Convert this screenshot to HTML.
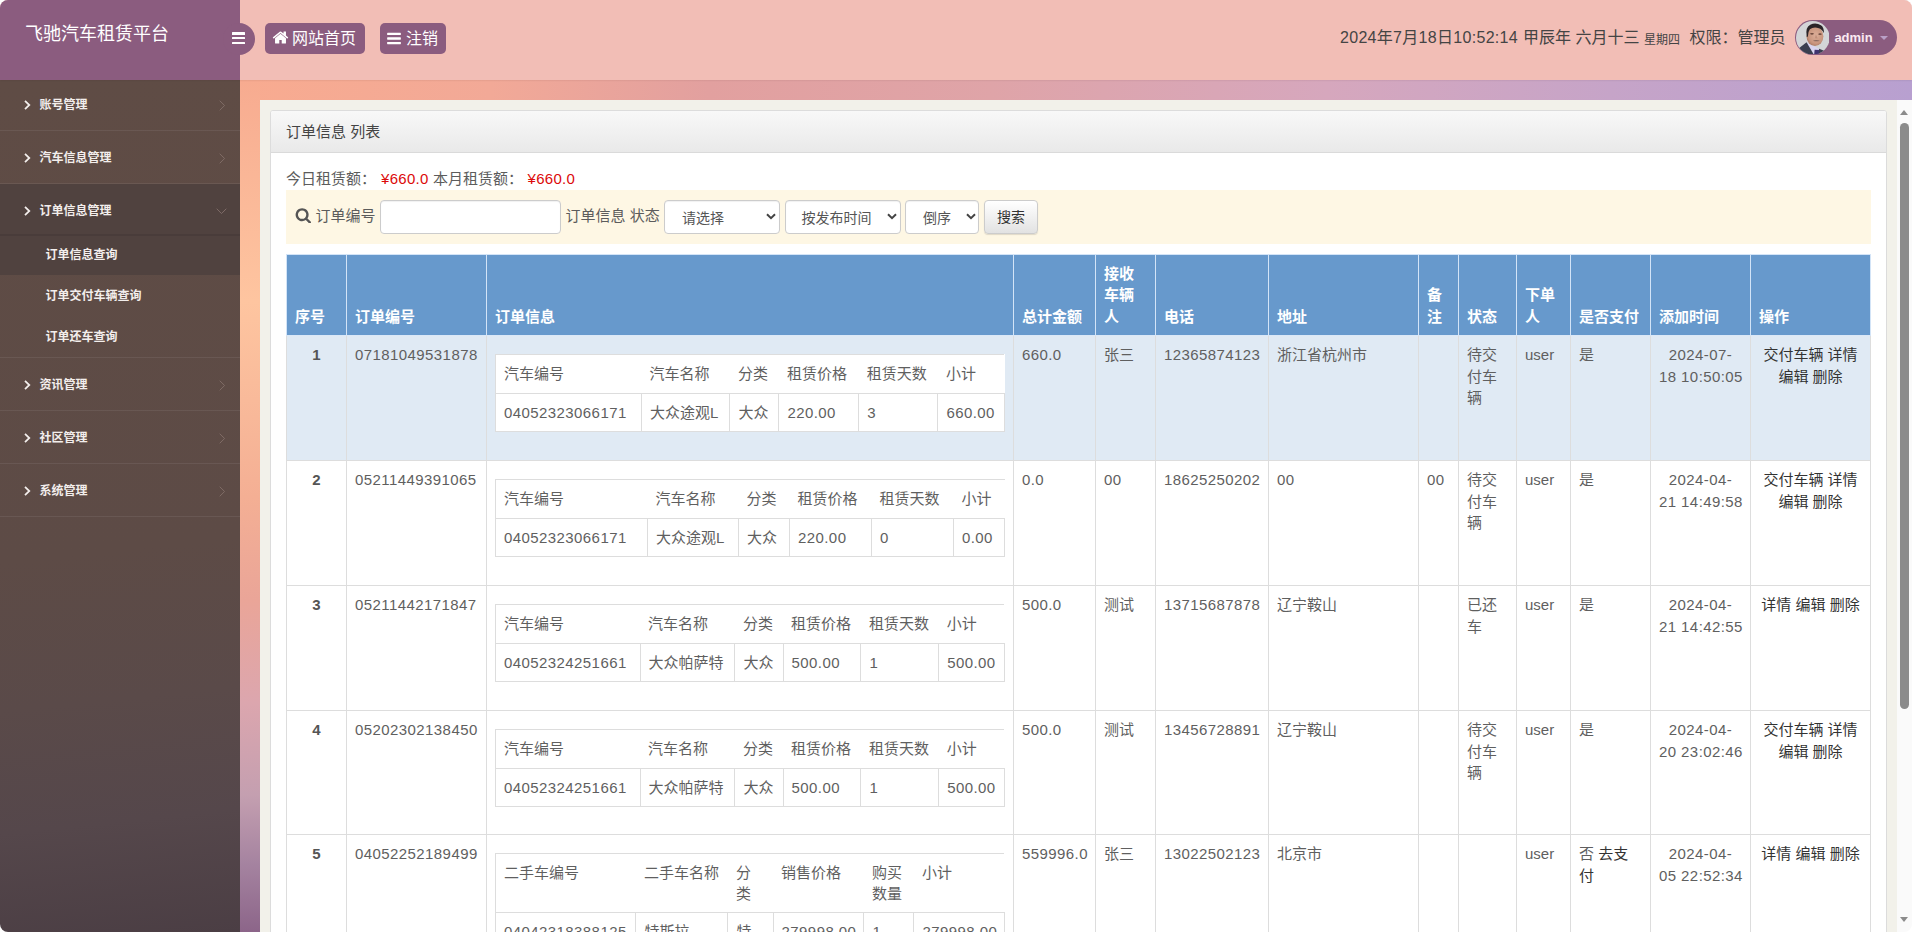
<!DOCTYPE html>
<html lang="zh-CN">
<head>
<meta charset="utf-8">
<title>飞驰汽车租赁平台</title>
<style>
*{box-sizing:border-box;margin:0;padding:0}
html,body{width:1912px;height:932px;overflow:hidden;background:#fff}
body{font-family:"Liberation Sans","Noto Sans CJK SC",sans-serif;font-size:15px;color:#5c5c5c;line-height:1.42857}
a{color:#333;text-decoration:none}
#app{position:absolute;left:0;top:0;width:1912px;height:932px;border-radius:8px;overflow:hidden;background:#fff}
/* ---------- header ---------- */
#top{position:absolute;left:0;top:0;width:1912px;height:80px;background:#f2beb6;z-index:5;box-shadow:0 0 2px rgba(60,30,30,.18)}
#brand{position:absolute;left:0;top:0;width:240px;height:80px;background:#8b5c7f}
#brand .t{position:absolute;left:25px;top:20px;font-size:18px;line-height:28px;color:#fff;white-space:nowrap;font-weight:400}
#tog{position:absolute;left:223px;top:23px;width:32px;height:32px;border-radius:16px;background:#8b5c7f}
#tog i{position:absolute;left:9px;width:13px;height:2.4px;background:#fff;border-radius:.5px}
.hbtn{position:absolute;top:23px;height:31px;background:#8b5c7f;border-radius:5px;color:#fff;font-size:16px;line-height:31px;white-space:nowrap}
.hbtn svg{position:absolute}
.hbtn span{position:absolute;top:0}
#clock{position:absolute;top:0;height:80px;color:#444;font-size:16px;line-height:22px;white-space:nowrap}
#clock span{position:absolute;top:27px}
#user{position:absolute;left:1795px;top:20px;width:102px;height:35px;border-radius:18px;background:#8b5c7f}
#user .nm{position:absolute;left:39.400px;top:7.700px;font-size:13px;line-height:20px;font-weight:bold;color:#fbeaf2}
#user .ct{position:absolute;left:85px;top:16px;width:0;height:0;border-left:4px solid transparent;border-right:4px solid transparent;border-top:4px solid #b9a0c6}
/* ---------- sidebar ---------- */
#side{position:absolute;left:0;top:80px;width:240px;height:852px;background:linear-gradient(174deg,#5f4c45 0%,#5d4b46 55%,#5a4a49 72%,#55474b 86%,#4b3e44 100%)}
#side .it{position:absolute;left:0;width:240px;color:#f3eeec;font-size:12px;font-weight:bold;white-space:nowrap}
#side .it .tx{position:absolute;left:39.5px;top:0;line-height:18px}
#side .sep{position:absolute;left:0;width:240px;height:1px;background:rgba(255,255,255,.07)}
#side svg{position:absolute}
/* ---------- main ---------- */
#bgtop{position:absolute;left:240px;top:80px;width:1672px;height:20px;background:linear-gradient(90deg,#f8ab90 0%,#f2a997 15%,#e2a09f 28%,#dfa4a8 45%,#d6a7bd 65%,#c6a4c8 82%,#b8a0d0 100%)}
#bgleft{position:absolute;left:240px;top:80px;width:20px;height:852px;background:linear-gradient(180deg,#f7ab90 0%,#fec5a0 26%,#f4af94 49%,#eaa598 61%,#dca6ae 73%,#c49fb0 84%,#a583a0 92%,#8c6589 100%)}
#panel{position:absolute;left:260px;top:100px;width:1637px;height:832px;background:#f2f1ea}
#sbar{position:absolute;left:1897px;top:100px;width:15px;height:832px;background:#fafafa}

#wb{position:absolute;left:10px;top:10px;width:1617px;height:900px;border:1px solid #dcdcdc;border-radius:3px;background:#fff;overflow:hidden}
#wh{position:absolute;left:0;top:0;width:1615px;height:42px;background:linear-gradient(180deg,#f8f8f8 0%,#e9e9e9 100%);border-bottom:1px solid #dadada}
#wh span{position:absolute;left:15px;top:10px;font-size:15px;line-height:22px;color:#444;white-space:nowrap}
#stat{position:absolute;left:15px;top:57px;height:22px;line-height:22px;white-space:nowrap;font-size:15px;color:#5c5c5c}
#stat span{position:absolute;top:0}
#stat .r{color:#dc0a0a}
#sb{position:absolute;left:15px;top:79px;width:1584.500px;height:54px;background:#fef7e4}
#sb .lb{position:absolute;top:15px;line-height:22px;font-size:15px;color:#5c5c5c;white-space:nowrap}
#sb .in{position:absolute;top:10px;height:34px;background:#fff;border:1px solid #ccc;border-radius:4px;box-shadow:inset 0 1px 1px rgba(0,0,0,.06)}
#sb .in span{position:absolute;top:6px;line-height:22px;font-size:14px;color:#555;white-space:nowrap}
#sb .bt{position:absolute;left:698px;top:10px;width:54px;height:34px;border:1px solid #ccc;border-radius:4px;background:linear-gradient(180deg,#fff 0%,#e2e2e2 100%);box-shadow:0 1px 1px rgba(0,0,0,.12);font-size:14px;line-height:32px;color:#333;text-align:center}
#tb{position:absolute;left:15px;top:143px;width:1584px;border-collapse:collapse;table-layout:fixed;font-size:15px;color:#5f5f5f}
#tb>thead>tr>th{background:#6799cc;color:#fff;font-weight:bold;text-align:left;vertical-align:bottom;padding:8px 8px 8px 8px;border:1px solid #d3e4f7;border-bottom:0;height:80.200px;line-height:21.430px}
#tb>tbody>tr>td{vertical-align:top;padding:8px;border:1px solid #ddd;line-height:21.430px;white-space:nowrap}
#tb>tbody>tr.hv>td{background:#e0eaf4;border-top-color:#dbe8f7}
#tb td.c{text-align:center}
#tb td.b{font-weight:bold;text-align:center;color:#555}
#tb td.n{letter-spacing:.42px}
.nt{border-collapse:collapse;table-layout:fixed;width:509px;margin-top:9.300px;background:#fff;font-size:15px;color:#5f5f5f}
.nt th{height:39px;font-weight:normal;text-align:left;vertical-align:top;padding:8px;border-top:1px solid #ddd;border-left:0;line-height:21.430px;white-space:nowrap}
.nt th:first-child{border-left:1px solid #ddd}
.nt td{height:38px;padding:8px;border:1px solid #ddd;line-height:21.430px;white-space:nowrap;vertical-align:top}
.nt td.n{letter-spacing:.42px}
</style>
</head>
<body>
<div id="app">
  <div id="top">
    <div id="brand"><div class="t">飞驰汽车租赁平台</div></div>
    <div id="tog"><i style="top:9.400px"></i><i style="top:14px"></i><i style="top:18.600px"></i></div>
    <div class="hbtn" style="left:265px;width:100px"><svg style="left:6.500px;top:6.400px" width="17" height="17" viewBox="0 0 1792 1792"><path fill="#fff" d="M1472 992v480q0 26-19 45t-45 19h-384v-384h-256v384h-384q-26 0-45-19t-19-45v-480q0-1 .5-3t.5-3l575-474 575 474q1 2 1 6zm223-69l-62 74q-8 9-21 11h-3q-13 0-21-7l-692-577-692 577q-12 8-24 7-13-2-21-11l-62-74q-8-10-7-23.500t11-21.500l719-599q32-26 76-26t76 26l244 204v-195q0-14 9-23t23-9h192q14 0 23 9t9 23v408l219 182q10 8 11 21.500t-7 23.500z"/></svg><span style="left:27px">网站首页</span></div>
    <div class="hbtn" style="left:380px;width:66px"><svg style="left:6px;top:7px" width="16" height="17" viewBox="0 0 1792 1792"><path fill="#fff" d="M1664 1344v128q0 26-19 45t-45 19h-1408q-26 0-45-19t-19-45v-128q0-26 19-45t45-19h1408q26 0 45 19t19 45zm0-512v128q0 26-19 45t-45 19h-1408q-26 0-45-19t-19-45v-128q0-26 19-45t45-19h1408q26 0 45 19t19 45zm0-512v128q0 26-19 45t-45 19h-1408q-26 0-45-19t-19-45v-128q0-26 19-45t45-19h1408q26 0 45 19t19 45z"/></svg><span style="left:26px">注销</span></div>
    <div id="clock">
      <span style="left:1340px;letter-spacing:.3px">2024年7月18日10:52:14</span>
      <span style="left:1523px">甲辰年</span>
      <span style="left:1575.500px">六月十三</span>
      <span style="left:1644px;font-size:12px;top:29px">星期四</span>
      <span style="left:1689.500px">权限：管理员</span>
    </div>
    <div id="user">
      <svg style="position:absolute;left:.7px;top:.7px" width="33.600" height="33.600" viewBox="0 0 33 33">
        <defs><clipPath id="av"><circle cx="16.500" cy="16.500" r="16.500"/></clipPath>
        <radialGradient id="fc" cx="55%" cy="45%" r="60%"><stop offset="0" stop-color="#dcae98"/><stop offset=".7" stop-color="#c9967f"/><stop offset="1" stop-color="#a87762"/></radialGradient></defs>
        <g clip-path="url(#av)">
          <rect width="33" height="33" fill="#d3d5d7"/>
          <path d="M10.500 21 L24 28 L22 33 L15 33 Z" fill="#d9d5f1"/>
          <path d="M2.500 27 L10.400 20.800 L17.500 33 L3 33 Z" fill="#3a3f4f"/>
          <path d="M22.800 27.300 L27.500 29.300 L25 33 L21.200 33 Z" fill="#3a3f4f"/>
          <path d="M18.300 28.200 L22.900 28.600 L22.300 33 L17.800 33 Z" fill="#40346f"/>
          <ellipse cx="18.600" cy="15" rx="8.300" ry="9.600" fill="url(#fc)"/>
          <path d="M10.600 15.500 Q8.800 6 14 3.600 Q19.500 1 24.500 4.200 Q27.800 6.500 27.300 12 Q26 8.200 22.500 7 Q17 5.600 13.600 8 Q11.600 10.500 11.600 15.500 Z" fill="#2a2427"/>
          <ellipse cx="15.700" cy="12.600" rx="1.900" ry=".8" fill="#5b3a30" opacity=".85"/>
          <ellipse cx="23.600" cy="12.900" rx="1.700" ry=".8" fill="#5b3a30" opacity=".85"/>
          <path d="M19.500 13 L18.600 17 L21.300 17.200 Z" fill="#b88672" opacity=".7"/>
          <path d="M16.600 19.300 Q20 17.800 23.400 19.500 Q20 20.600 16.600 19.300 Z" fill="#7c5f58" opacity=".85"/>
        </g>
      </svg>
      <div class="nm">admin</div><div class="ct"></div>
    </div>
  </div>
  <div id="side">
<div style="position:absolute;left:0;top:103.500px;width:240px;height:51px;background:#50423f"></div>
<div style="position:absolute;left:0;top:154px;width:240px;height:2px;background:#493c3a"></div>
<div style="position:absolute;left:0;top:156px;width:240px;height:38.500px;background:#50423f"></div>
<div class="sep" style="top:50px"></div>
<div class="sep" style="top:103px"></div>
<div class="sep" style="top:277px"></div>
<div class="sep" style="top:330px"></div>
<div class="sep" style="top:383px"></div>
<div class="sep" style="top:436px"></div>
<div class="it" style="top:16.4px;height:18px"><svg style="left:24px;top:4px" width="7" height="10" viewBox="0 0 7 10"><path d="M1 .8 L5.300 5 L1 9.200" fill="none" stroke="#f3eeec" stroke-width="1.750"/></svg><span class="tx">账号管理</span><svg style="left:219px;top:4px" width="7" height="11" viewBox="0 0 7 11"><path d="M.7 .7 L5.600 5.500 L.7 10.300" fill="none" stroke="#7f6c66" stroke-width="1"/></svg></div>
<div class="it" style="top:69.3px;height:18px"><svg style="left:24px;top:4px" width="7" height="10" viewBox="0 0 7 10"><path d="M1 .8 L5.300 5 L1 9.200" fill="none" stroke="#f3eeec" stroke-width="1.750"/></svg><span class="tx">汽车信息管理</span><svg style="left:219px;top:4px" width="7" height="11" viewBox="0 0 7 11"><path d="M.7 .7 L5.600 5.500 L.7 10.300" fill="none" stroke="#7f6c66" stroke-width="1"/></svg></div>
<div class="it" style="top:122.3px;height:18px"><svg style="left:24px;top:4px" width="7" height="10" viewBox="0 0 7 10"><path d="M1 .8 L5.300 5 L1 9.200" fill="none" stroke="#f3eeec" stroke-width="1.750"/></svg><span class="tx">订单信息管理</span><svg style="left:216px;top:6px" width="11" height="7" viewBox="0 0 11 7"><path d="M.7 .7 L5.500 5.600 L10.300 .7" fill="none" stroke="#7f6c68" stroke-width="1"/></svg></div>
<div class="it" style="top:296.0px;height:18px"><svg style="left:24px;top:4px" width="7" height="10" viewBox="0 0 7 10"><path d="M1 .8 L5.300 5 L1 9.200" fill="none" stroke="#f3eeec" stroke-width="1.750"/></svg><span class="tx">资讯管理</span><svg style="left:219px;top:4px" width="7" height="11" viewBox="0 0 7 11"><path d="M.7 .7 L5.600 5.500 L.7 10.300" fill="none" stroke="#7f6c66" stroke-width="1"/></svg></div>
<div class="it" style="top:348.9px;height:18px"><svg style="left:24px;top:4px" width="7" height="10" viewBox="0 0 7 10"><path d="M1 .8 L5.300 5 L1 9.200" fill="none" stroke="#f3eeec" stroke-width="1.750"/></svg><span class="tx">社区管理</span><svg style="left:219px;top:4px" width="7" height="11" viewBox="0 0 7 11"><path d="M.7 .7 L5.600 5.500 L.7 10.300" fill="none" stroke="#7f6c66" stroke-width="1"/></svg></div>
<div class="it" style="top:401.9px;height:18px"><svg style="left:24px;top:4px" width="7" height="10" viewBox="0 0 7 10"><path d="M1 .8 L5.300 5 L1 9.200" fill="none" stroke="#f3eeec" stroke-width="1.750"/></svg><span class="tx">系统管理</span><svg style="left:219px;top:4px" width="7" height="11" viewBox="0 0 7 11"><path d="M.7 .7 L5.600 5.500 L.7 10.300" fill="none" stroke="#7f6c66" stroke-width="1"/></svg></div>
<div class="it" style="top:166.2px;height:18px"><span class="tx" style="left:45.500px">订单信息查询</span></div>
<div class="it" style="top:207.1px;height:18px"><span class="tx" style="left:45.500px">订单交付车辆查询</span></div>
<div class="it" style="top:247.9px;height:18px"><span class="tx" style="left:45.500px">订单还车查询</span></div>
</div>
  <div id="bgtop"></div>
  <div id="bgleft"></div>
  <div id="panel">
  <div id="wb">
    <div id="wh"><span>订单信息 列表</span></div>
    <div id="stat"><span style="left:0">今日租赁额：</span><span class="r" style="left:95px;letter-spacing:.3px">¥660.0</span><span style="left:147px">本月租赁额：</span><span class="r" style="left:241.500px;letter-spacing:.3px">¥660.0</span></div>
    <div id="sb">
      <svg style="position:absolute;left:9.300px;top:16.600px" width="16.600" height="16.600" viewBox="0 0 1792 1792"><path fill="#555" d="M1216 832q0-185-131.500-316.500t-316.500-131.500-316.500 131.500-131.500 316.500 131.500 316.500 316.500 131.500 316.500-131.500 131.500-316.500zm512 832q0 52-38 90t-90 38q-54 0-90-38l-343-342q-179 124-399 124-143 0-273.500-55.500t-225-150-150-225-55.500-273.500 55.500-273.500 150-225 225-150 273.500-55.500 273.500 55.500 225 150 150 225 55.500 273.500q0 220-124 399l343 343q37 37 37 90z"/></svg>
      <span class="lb" style="left:29.500px">订单编号</span>
      <div class="in" style="left:94px;width:180.500px"></div>
      <span class="lb" style="left:279.500px">订单信息 状态</span>
      <div class="in" style="left:378px;width:116px"><span style="left:17px">请选择</span><span style="left:101px;top:12.400px;line-height:0"><svg width="10" height="7" viewBox="0 0 10 7"><path d="M1 1.200 L5 5.200 L9 1.200" fill="none" stroke="#444" stroke-width="2"/></svg></span></div>
      <div class="in" style="left:498.500px;width:116px"><span style="left:16px">按发布时间</span><span style="left:101px;top:12.400px;line-height:0"><svg width="10" height="7" viewBox="0 0 10 7"><path d="M1 1.200 L5 5.200 L9 1.200" fill="none" stroke="#444" stroke-width="2"/></svg></span></div>
      <div class="in" style="left:619px;width:74px"><span style="left:17px">倒序</span><span style="left:60px;top:12.400px;line-height:0"><svg width="10" height="7" viewBox="0 0 10 7"><path d="M1 1.200 L5 5.200 L9 1.200" fill="none" stroke="#444" stroke-width="2"/></svg></span></div>
      <div class="bt">搜索</div>
    </div>
    <table id="tb"><colgroup><col style="width:60px"><col style="width:140px"><col style="width:527px"><col style="width:82px"><col style="width:60px"><col style="width:113px"><col style="width:150px"><col style="width:40px"><col style="width:58px"><col style="width:54px"><col style="width:80px"><col style="width:100px"><col style="width:120px"></colgroup>
<thead><tr><th>序号</th><th>订单编号</th><th>订单信息</th><th>总计金额</th><th>接收<br>车辆<br>人</th><th>电话</th><th>地址</th><th>备<br>注</th><th>状态</th><th>下单<br>人</th><th>是否支付</th><th>添加时间</th><th>操作</th></tr></thead>
<tbody>
<tr class="hv" style="height:125px"><td class="b">1</td><td class="n">07181049531878</td><td><table class="nt"><colgroup><col style="width:146px"><col style="width:88.4px"><col style="width:49px"><col style="width:79.9px"><col style="width:79.1px"><col style="width:66.6px"></colgroup><tr><th>汽车编号</th><th>汽车名称</th><th>分类</th><th>租赁价格</th><th>租赁天数</th><th>小计</th></tr><tr><td class="n">04052323066171</td><td>大众途观L</td><td>大众</td><td class="n">220.00</td><td class="n">3</td><td class="n">660.00</td></tr></table></td><td class="n">660.0</td><td>张三</td><td class="n">12365874123</td><td>浙江省杭州市</td><td></td><td>待交<br>付车<br>辆</td><td>user</td><td>是</td><td class="c n">2024-07-<br>18 10:50:05</td><td class="c"><a>交付车辆</a> <a>详情</a><br><a>编辑</a> <a>删除</a></td></tr>
<tr class="" style="height:125px"><td class="b">2</td><td class="n">05211449391065</td><td><table class="nt"><colgroup><col style="width:152px"><col style="width:91px"><col style="width:51px"><col style="width:82px"><col style="width:82px"><col style="width:51px"></colgroup><tr><th>汽车编号</th><th>汽车名称</th><th>分类</th><th>租赁价格</th><th>租赁天数</th><th>小计</th></tr><tr><td class="n">04052323066171</td><td>大众途观L</td><td>大众</td><td class="n">220.00</td><td class="n">0</td><td class="n">0.00</td></tr></table></td><td class="n">0.0</td><td class="n">00</td><td class="n">18625250202</td><td class="n">00</td><td class="n">00</td><td>待交<br>付车<br>辆</td><td>user</td><td>是</td><td class="c n">2024-04-<br>21 14:49:58</td><td class="c"><a>交付车辆</a> <a>详情</a><br><a>编辑</a> <a>删除</a></td></tr>
<tr class="" style="height:125px"><td class="b">3</td><td class="n">05211442171847</td><td><table class="nt"><colgroup><col style="width:144.5px"><col style="width:94.9px"><col style="width:48.2px"><col style="width:77.8px"><col style="width:77.8px"><col style="width:65.8px"></colgroup><tr><th>汽车编号</th><th>汽车名称</th><th>分类</th><th>租赁价格</th><th>租赁天数</th><th>小计</th></tr><tr><td class="n">04052324251661</td><td>大众帕萨特</td><td>大众</td><td class="n">500.00</td><td class="n">1</td><td class="n">500.00</td></tr></table></td><td class="n">500.0</td><td>测试</td><td class="n">13715687878</td><td>辽宁鞍山</td><td></td><td>已还<br>车</td><td>user</td><td>是</td><td class="c n">2024-04-<br>21 14:42:55</td><td class="c"><a>详情</a> <a>编辑</a> <a>删除</a></td></tr>
<tr class="" style="height:124px"><td class="b">4</td><td class="n">05202302138450</td><td><table class="nt"><colgroup><col style="width:144.5px"><col style="width:94.9px"><col style="width:48.2px"><col style="width:77.8px"><col style="width:77.8px"><col style="width:65.8px"></colgroup><tr><th>汽车编号</th><th>汽车名称</th><th>分类</th><th>租赁价格</th><th>租赁天数</th><th>小计</th></tr><tr><td class="n">04052324251661</td><td>大众帕萨特</td><td>大众</td><td class="n">500.00</td><td class="n">1</td><td class="n">500.00</td></tr></table></td><td class="n">500.0</td><td>测试</td><td class="n">13456728891</td><td>辽宁鞍山</td><td></td><td>待交<br>付车<br>辆</td><td>user</td><td>是</td><td class="c n">2024-04-<br>20 23:02:46</td><td class="c"><a>交付车辆</a> <a>详情</a><br><a>编辑</a> <a>删除</a></td></tr>
<tr class="" style="height:150px"><td class="b">5</td><td class="n">04052252189499</td><td><table class="nt"><colgroup><col style="width:140.4px"><col style="width:92px"><col style="width:45.2px"><col style="width:90.9px"><col style="width:50px"><col style="width:90.5px"></colgroup><tr><th>二手车编号</th><th>二手车名称</th><th>分<br>类</th><th>销售价格</th><th>购买<br>数量</th><th>小计</th></tr><tr><td class="n">04042318388125</td><td>特斯拉</td><td>特<br>斯</td><td class="n">279998.00</td><td class="n">1</td><td class="n">279998.00</td></tr></table></td><td class="n">559996.0</td><td>张三</td><td class="n">13022502123</td><td>北京市</td><td></td><td></td><td>user</td><td>否 <a>去支<br>付</a></td><td class="c n">2024-04-<br>05 22:52:34</td><td class="c"><a>详情</a> <a>编辑</a> <a>删除</a></td></tr>
</tbody></table>
  </div>
</div>
  <div id="sbar"><div style="position:absolute;left:3px;top:22.500px;width:9px;height:586px;border-radius:4.500px;background:#8b8b8b"></div><div style="position:absolute;left:2.900px;top:9.700px;width:0;height:0;border-left:4.600px solid transparent;border-right:4.600px solid transparent;border-bottom:5.200px solid #8b8b8b"></div><div style="position:absolute;left:2.900px;top:816.800px;width:0;height:0;border-left:4.600px solid transparent;border-right:4.600px solid transparent;border-top:5.200px solid #8b8b8b"></div></div>
</div>
</body>
</html>
